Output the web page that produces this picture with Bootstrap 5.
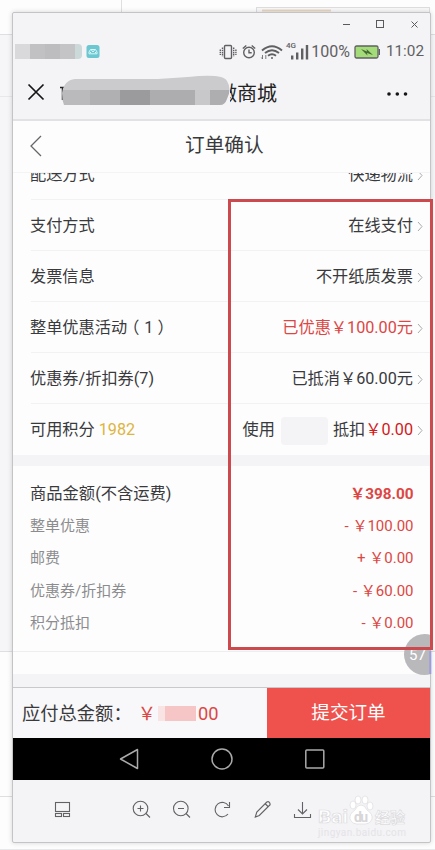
<!DOCTYPE html>
<html lang="zh-CN">
<head>
<meta charset="utf-8">
<meta name="viewport" content="width=device-width, initial-scale=1">
<title>订单确认</title>
<link href="https://cdn.jsdelivr.net/npm/bootstrap@5.3.0/dist/css/bootstrap.min.css" rel="stylesheet">
<style>
  html, body { height: 850px; overflow: hidden; }
  body { width: 435px; font-family: Roboto, "Noto Sans CJK SC", sans-serif; color: #3a3a3c; background: #fdfdfd; line-height: 1; }
  svg { display: block; flex: none; }
  .backdrop { left: 0; top: 0; z-index: 0; }
  .viewer { z-index: 1; width: 419px; height: 831px; margin: 12px 0 0 12px; background: #f4f3f6; border: 1px solid #c4c4c6; border-radius: 2px; box-shadow: 0 0 5px rgba(0,0,0,.16); }
  .titlebar { height: 25px; }
  .statusbar { height: 26px; color: #606063; padding-top: 1px; }
  .status-text { font-size: 16px; }
  .status-time { font-size: 15.3px; margin: 0 6px 0 5px; }
  .chat-head { height: 57px; border-bottom: 2px solid #e2e1e4; color: #222; font-size: 20px; }
  .chat-name { width: 47px; }
  .more-dots { margin-right: 21px; }
  .page-head { height: 52px; padding-bottom: 2px; border-bottom: 1px solid #f4f4f6; background: #fdfdfe; }
  .page-title { font-size: 19.7px; }
  .form-rows { background: #fdfdfe; font-size: 16.2px; }
  .form-line { height: 51px; padding: 2px 6px 0 17px; position: relative; }
  .form-line::after { content: ""; position: absolute; left: 18px; right: 0; bottom: 0; height: 1px; background: #f2f1f4; }
  .form-rows > .form-line:last-child::after { display: none; }
  .first-clip { height: 27px; overflow: hidden; display: flex; align-items: flex-end; }
  .first-clip .form-line { flex: 1 0 auto; }
  .paren-count { margin: 0 4px 0 5px; }
  .promo-name { margin-right: -4px; }
  .chev { margin-left: 4px; }
  .red { color: #dc4744; }
  .deep-red { color: #d3191b; }
  .gold { color: #deb540; }
  .points-box { width: 47px; height: 28px; border-radius: 4px; background: #f4f3f6; margin: 0 5px 0 6px; }
  .band { height: 11px; background: #f4f3f6; }
  .summary { height: 208px; background: #fdfdfe; padding: 12px 16.5px 0 17px; font-size: 15px; color: #8c8c8e; position: relative; }
  .summary::after { content: ""; position: absolute; left: 0; right: 0; top: 185px; height: 1px; background: #eeedf0; }
  .summary-line { height: 32.4px; }
  .summary-main { color: #3a3a3c; font-size: 16.3px; }
  .total-goods { font-size: 15.3px; }
  .strip { height: 14px; background: #f4f3f6; border-bottom: 1px solid #c9c8cb; }
  .paybar { height: 50px; background: #f8f7f9; font-size: 18.3px; }
  .pay-label { width: 254px; padding: 2px 0 0 9px; }
  .pay-sum { margin-left: 6px; }
  .pay-go { background: #ef524d; color: #fff; font-size: 18.6px; padding-top: 1px; }
  .blur-total { width: 38px; height: 15px; background: linear-gradient(90deg, #f9e3e3 0 7px, #f6c6c6 7px 100%); margin: 0 2px 0 2px; }
  .navkeys { height: 42px; background: #000; }
  .tools { height: 62px; }
  .mask-carrier { width: 67px; height: 15px; margin-left: 2px; border-radius: 0 4px 4px 0; background: linear-gradient(90deg, #d9d8db 0 15px, #c1c0c2 15px 30px, #bdbcbf 30px 45px, #c4c3c6 45px 60px, #cbdad8 60px); }
  .carrier-app { margin-left: 3px; }
  .overlay { left: 0; top: 0; z-index: 3; pointer-events: none; }
  .pick-frame { left: 228px; top: 199px; width: 205px; height: 451px; border: 3px solid #cc4a4d; z-index: 4; }
  .count-bubble { left: 404px; top: 634px; width: 27px; height: 41px; overflow: hidden; z-index: 3; color: #fff; font-size: 15px; }
  .count-bubble > div { width: 41px; height: 41px; border-radius: 50%; background: #b9b8ba; padding: 14px 0 0 5px; }
</style>
<script src="https://cdn.jsdelivr.net/npm/bootstrap@5.3.0/dist/js/bootstrap.bundle.min.js"></script>
</head>
<body class="position-relative">
<svg class="backdrop position-absolute" width="435" height="850">
  <rect y="34" width="435" height="617" fill="#f6f5f8"/>
  <path d="M0 34.5H435M0 651.5H435M0 796.5H435M121.5 0V12" stroke="#dfdfe1" fill="none"/>
  <path d="M0 96.5H435M0 849.5H435" stroke="#e8e8ea"/>
  <rect x="256.500" y="7.500" width="173" height="20" fill="#f9f8f8" stroke="#dddde0"/>
  <path d="M262 10.500H331" stroke="#e9d6c4" stroke-width="2"/>
</svg>

<main class="viewer position-relative d-flex flex-column">
  <div class="titlebar">
    <svg width="417" height="25" fill="none" stroke="#59595c">
      <path d="M330 11.500h7M398.500 8.500l6 6m0-6l-6 6"/><rect x="363.500" y="7.500" width="7" height="7"/>
    </svg>
  </div>

  <div class="statusbar d-flex align-items-center">
    <div class="mask-carrier"></div>
    <svg class="carrier-app" width="16" height="14" viewBox="0 0 16 14"><rect x="1.500" width="13" height="13" rx="2.500" fill="#6cc8d0"/><path d="M4 8.800V7l1.500-2.500h5L12 7v1.800zM6 4.500L8 7l2-2.500M5 7.500h1m4 0h1" fill="none" stroke="#d9f5f7"/></svg>
    <svg class="ms-auto" width="92" height="22" viewBox="218 40 92 22" fill="none" stroke="#606063" stroke-width="1.400">
      <rect x="223.500" y="44.500" width="7" height="13" rx="1"/>
      <path d="M221.500 46.500v9M219.300 48.500v5.500M232.700 46.500v9M234.900 48.500v5.500" stroke-dasharray="1.500 .7"/>
      <circle cx="248" cy="51.500" r="5.300"/><path d="M248 48.500v3.300h2.700M241.800 47.500l3.500-3M254.200 47.500l-3.500-3"/>
      <path d="M261 49.500q10-8.500 20 0M264 52q7-5.500 14 0M267 54.700q4-3 8 0" stroke-width="1.900"/><circle cx="271" cy="57" r="1" fill="#606063" stroke="none"/>
      <path d="M261.500 54v4m-1.200-1.500l1.200 1.500M264.800 58v-4"  stroke-width=".8"/>
      <path d="M291.200 54.500v4M296.200 51.500v7M301.200 47.500v11M306 44v14.500" stroke-width="2.400"/>
      <text x="285" y="47" font-size="8" font-weight="500" fill="#606063" stroke="none">4G</text>
    </svg>
    <span class="status-text">100%</span>
    <svg class="ms-1" width="27" height="14" viewBox="0 0 27 14"><rect x="1" y="1" width="23" height="12" rx="1.500" fill="#a5dc7a" stroke="#606063" stroke-width="1.300"/><path d="M25.300 4v6" stroke="#606063" stroke-width="1.400"/><path d="M7 4l6 2.500L12.500 4 19 10l-6-2 .5 2.500z" fill="#456c35"/></svg>
    <span class="status-time">11:02</span>
  </div>

  <div class="chat-head d-flex align-items-center">
    <svg width="217" height="44" viewBox="13 71 217 44">
      <path d="M28.500 85.500l15 15m0-15l-15 15" stroke="#161616" stroke-width="1.700"/>
      <path d="M60 88.500h4M62.500 89v12" stroke="#2a2a2a" stroke-width="1.500"/>
      <clipPath id="smear"><path d="M62 94q2-13 13-14h83l30-2q35-4 39 4 5 8 0 18-2 6-7 6H64q-2-5-2-12z"/></clipPath>
      <g clip-path="url(#smear)"><rect x="60" y="71" width="170" height="20" fill="#cbcacd"/><rect x="60" y="91" width="30" height="15" fill="#bab9bc"/><rect x="90" y="91" width="30" height="15" fill="#b0afb2"/><rect x="120" y="91" width="30" height="15" fill="#9b9a9d"/><rect x="150" y="91" width="45" height="15" fill="#adacaf"/><rect x="195" y="91" width="15" height="15" fill="#c8c7ca"/><rect x="210" y="91" width="20" height="15" fill="#aeadb0"/></g>
    </svg>
    <div class="chat-name overflow-hidden d-flex justify-content-end flex-shrink-0 pt-1"><span class="text-nowrap">微商城</span></div>
    <svg class="more-dots ms-auto mt-1" width="24" height="8"><g fill="#151515"><circle cx="4" cy="4" r="1.800"/><circle cx="12.300" cy="4" r="1.800"/><circle cx="20.500" cy="4" r="1.800"/></g></svg>
  </div>

  <div class="page-head d-flex align-items-center">
    <svg width="172" height="24"><path d="M28 2L18 12l10 10" fill="none" stroke="#66666a" stroke-width="1.300"/></svg>
    <span class="page-title">订单确认</span>
  </div>

  <section class="form-rows">
    <div class="first-clip"><div class="form-line d-flex align-items-center justify-content-between">
      <span>配送方式</span><span class="d-flex align-items-center">快递物流<svg class="chev" width="7" height="11"><path d="M1 1l4 4.500-4 4.500" fill="none" stroke="#aaaaad"/></svg></span></div></div>
    <div class="form-line d-flex align-items-center justify-content-between">
      <span>支付方式</span><span class="d-flex align-items-center">在线支付<svg class="chev" width="7" height="11"><path d="M1 1l4 4.500-4 4.500" fill="none" stroke="#aaaaad"/></svg></span></div>
    <div class="form-line d-flex align-items-center justify-content-between">
      <span>发票信息</span><span class="d-flex align-items-center">不开纸质发票<svg class="chev" width="7" height="11"><path d="M1 1l4 4.500-4 4.500" fill="none" stroke="#aaaaad"/></svg></span></div>
    <div class="form-line d-flex align-items-center justify-content-between">
      <span><span class="promo-name">整单优惠活动</span>（<span class="paren-count">1</span>）</span><span class="d-flex align-items-center red">已优惠￥100.00元<svg class="chev" width="7" height="11"><path d="M1 1l4 4.500-4 4.500" fill="none" stroke="#aaaaad"/></svg></span></div>
    <div class="form-line d-flex align-items-center justify-content-between">
      <span>优惠券/折扣券(7)</span><span class="d-flex align-items-center">已抵消￥60.00元<svg class="chev" width="7" height="11"><path d="M1 1l4 4.500-4 4.500" fill="none" stroke="#aaaaad"/></svg></span></div>
    <div class="form-line d-flex align-items-center justify-content-between">
      <span>可用积分 <span class="gold">1982</span></span><span class="d-flex align-items-center">使用<span class="points-box"></span>抵扣<span class="deep-red">￥0.00</span><svg class="chev" width="7" height="11"><path d="M1 1l4 4.500-4 4.500" fill="none" stroke="#aaaaad"/></svg></span></div>
  </section>

  <div class="band"></div>

  <section class="summary">
    <div class="summary-line summary-main d-flex align-items-center justify-content-between"><span>商品金额(不含运费)</span><b class="red total-goods">￥398.00</b></div>
    <div class="summary-line d-flex align-items-center justify-content-between"><span>整单优惠</span><span class="red">- ￥100.00</span></div>
    <div class="summary-line d-flex align-items-center justify-content-between"><span>邮费</span><span class="red">+ ￥0.00</span></div>
    <div class="summary-line d-flex align-items-center justify-content-between"><span>优惠券/折扣券</span><span class="red">- ￥60.00</span></div>
    <div class="summary-line d-flex align-items-center justify-content-between"><span>积分抵扣</span><span class="red">- ￥0.00</span></div>
  </section>

  <div class="strip"></div>

  <div class="paybar d-flex">
    <div class="pay-label d-flex align-items-center"><span>应付总金额：</span><span class="pay-sum red d-flex align-items-center">￥<span class="blur-total"></span>00</span></div>
    <div class="pay-go flex-fill d-flex align-items-center justify-content-center">提交订单</div>
  </div>

  <div class="navkeys">
    <svg width="417" height="42" viewBox="13 738 417 42" fill="none" stroke="#aaa" stroke-width="1.500" stroke-linejoin="round"><path d="M137.500 749.500v19L120.500 759z"/><circle cx="222" cy="759" r="10"/><rect x="305.800" y="750" width="18" height="18" rx="1"/></svg>
  </div>

  <div class="tools">
    <svg width="417" height="60" viewBox="13 780 417 60" fill="none" stroke="#626265" stroke-width="1.100">
      <rect x="55.500" y="802.500" width="14" height="9"/><rect x="55.500" y="813.500" width="6" height="3"/><rect x="63.500" y="813.500" width="6" height="3"/>
      <circle cx="140.500" cy="808.500" r="7.300"/><path d="M146 813.500l4 4M137.500 808.500h6M140.500 805.500v6"/>
      <circle cx="180.800" cy="808.500" r="7.300"/><path d="M186 813.500l4 4M178 808.500h6"/>
      <path d="M228 814a7.200 7.200 0 1 1 .5-8M229.500 802v5.500h-5.500"/>
      <path d="M255.300 817l1.500-5 10-10q2-1 3 1t-1 3l-9.500 9.500zM265 803.500l3.500 3.500"/>
      <path d="M302.500 802v12M298 809.500l4.500 4.500 4.500-4.500M294.500 814v3.500h16V814"/>
    </svg>
  </div>
</main>

<div class="count-bubble position-absolute"><div>57</div></div>
<div class="pick-frame position-absolute"></div>
<svg class="overlay position-absolute" width="435" height="850">
  <path d="M430.300 651v23" stroke="#9d9be0" stroke-width="2"/>
  <g fill="#fff" stroke="#dcdbde" stroke-width=".7" font-family="Roboto, 'Noto Sans CJK SC', sans-serif">
    <ellipse cx="353" cy="805" rx="3" ry="4"/><ellipse cx="358" cy="800" rx="3" ry="4"/><ellipse cx="365" cy="800" rx="3" ry="4"/><ellipse cx="370" cy="806" rx="3" ry="4"/>
    <path d="M361 805q4 0 6 5 6 4 5 9-2 6-11 5-9 1-11-5-1-5 5-9 2-5 6-5z"/>
    <text x="318" y="823" font-size="19" font-weight="700" textLength="30" lengthAdjust="spacingAndGlyphs">Bai</text>
    <text x="354" y="822" font-size="14" font-weight="700" fill="#d7d6d9" stroke="none" textLength="14">du</text>
    <text x="375" y="823" font-size="15" font-weight="700" textLength="30">经验</text>
    <text x="318" y="836" font-size="10" fill="#e4e3e7" stroke="none" textLength="88">jingyan.baidu.com</text>
  </g>
</svg>
</body>
</html>
